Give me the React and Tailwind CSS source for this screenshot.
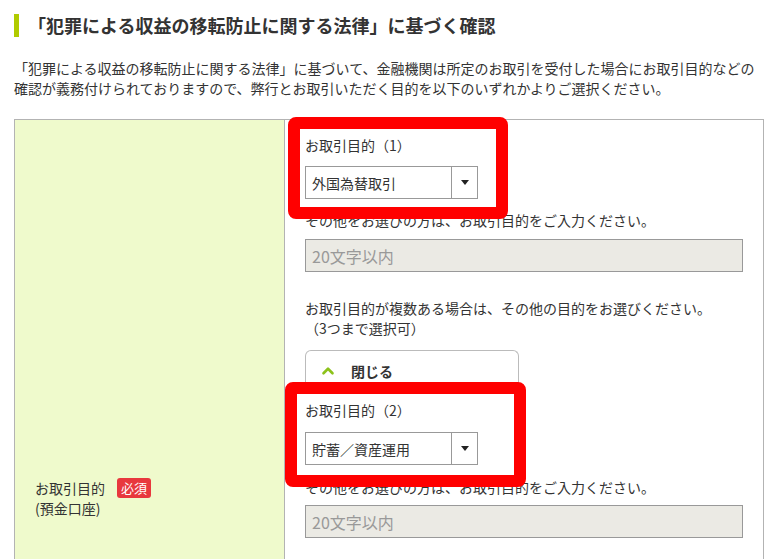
import { ChevronUp } from "lucide-react";

const SelectBox = ({ value }) => (
  <div className="flex w-[173px] h-[33px] border border-[#999] bg-white">
    <div className="flex-1 flex items-center pl-[6px] text-[14px] leading-none">{value}</div>
    <div className="w-[26px] border-l border-[#999] flex items-center justify-center">
      <span className="block w-0 h-0 border-l-[4px] border-r-[4px] border-t-[5px] border-l-transparent border-r-transparent border-t-[#222]" />
    </div>
  </div>
);

const TextBox = () => (
  <div className="w-[438px] h-[33px] border border-[#999] bg-[#ebeae4] flex items-center pl-[6px] text-[16px] text-[#999] leading-none">
    20文字以内
  </div>
);

export default function App() {
  return (
    <div className="relative w-[783px] h-[559px] overflow-hidden bg-white text-[#333] font-['Noto_Sans_CJK_JP',sans-serif]">
      <div className="px-[14px] pt-[14px]">
        {/* Heading */}
        <h2 className="flex items-center h-[23px]">
          <span className="w-[5px] h-[23px] bg-[#b0cb00] shrink-0" />
          <span className="ml-[9px] text-[18px] font-bold leading-[23px]">「犯罪による収益の移転防止に関する法律」に基づく確認</span>
        </h2>

        <p className="mt-[21px] text-[14px] leading-[20px]">
          「犯罪による収益の移転防止に関する法律」に基づいて、金融機関は所定のお取引を受付した場合にお取引目的などの<br />
          確認が義務付けられておりますので、弊行とお取引いただく目的を以下のいずれかよりご選択ください。
        </p>

        {/* Table */}
        <div className="mt-[21px] w-[750px] flex border border-[#b3b3b3] text-[14px] leading-[20px]">
          <div className="w-[270px] shrink-0 bg-[#effacc] border-r border-[#b3b3b3] pl-[20px] pt-[358px]">
            <div className="flex items-center">
              <span>お取引目的</span>
              <span className="ml-[12px] bg-[#e8383d] text-white text-[13px] leading-[20px] px-[4px] rounded-[3px]">必須</span>
            </div>
            <div>(預金口座)</div>
          </div>

          <div className="flex-1 pl-[20px] pt-[15px] pb-[40px]">
            <div>お取引目的（1）</div>
            <div className="mt-[11px]"><SelectBox value="外国為替取引" /></div>
            <div className="mt-[11px]">その他をお選びの方は、お取引目的をご入力ください。</div>
            <div className="mt-[9px]"><TextBox /></div>
            <div className="mt-[26px]">
              お取引目的が複数ある場合は、その他の目的をお選びください。<br />
              （3つまで選択可）
            </div>
            <div className="mt-[12px] w-[214px] h-[40px] border border-b-0 border-[#bbb] rounded-t-[6px] flex items-center pl-[13px]">
              <ChevronUp className="w-[18px] h-[18px] text-[#8cc21a]" strokeWidth={3.5} />
              <span className="ml-[14px] font-bold">閉じる</span>
            </div>
            <div className="mt-[10px]">お取引目的（2）</div>
            <div className="mt-[12px]"><SelectBox value="貯蓄／資産運用" /></div>
            <div className="mt-[12px]">その他をお選びの方は、お取引目的をご入力ください。</div>
            <div className="mt-[8px]"><TextBox /></div>
          </div>
        </div>
      </div>

      {/* annotation boxes */}
      <div className="absolute left-[288px] top-[117px] w-[220px] h-[102px] border-[12px] border-[#ff0000] rounded-[8px]" />
      <div className="absolute left-[285px] top-[382px] w-[241px] h-[105px] border-[12px] border-[#ff0000] rounded-[8px]" />
    </div>
  );
}
